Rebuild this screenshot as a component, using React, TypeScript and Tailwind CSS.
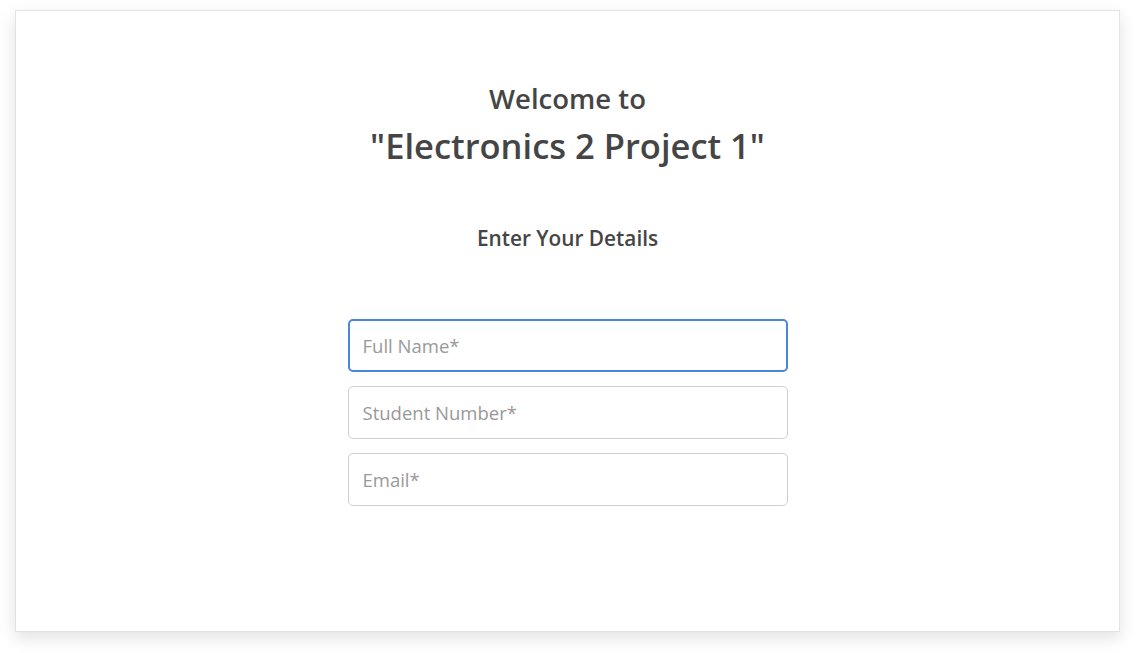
import { useState } from "react";

const FIELDS = [
  { name: "fullName", placeholder: "Full Name*" },
  { name: "studentNumber", placeholder: "Student Number*" },
  { name: "email", placeholder: "Email*" },
];

export default function App() {
  const [values, setValues] = useState<Record<string, string>>({});

  return (
    <div className="min-h-[653px] bg-white pt-[10px] pl-[15px] pr-[16px] font-['Open_Sans',sans-serif]">
      <div className="h-[622px] border border-[#e3e3e3] bg-white shadow-[0_6px_16px_rgba(0,0,0,0.12)]">
        <div className="flex flex-col items-center pt-[69px] text-[#454545]">
          <h2 className="text-[27.5px] leading-[37px] font-semibold">Welcome to</h2>
          <h1 className="mt-[5px] text-[34.5px] leading-[47px] font-semibold">"Electronics 2 Project 1"</h1>
          <p className="mt-[55px] text-[20.8px] leading-[29px] font-semibold">Enter Your Details</p>

          <form className="mt-[66px] flex w-[440px] flex-col gap-[14px]" onSubmit={(e) => e.preventDefault()}>
            {FIELDS.map((f, i) => (
              <input
                key={f.name}
                autoFocus={i === 0}
                value={values[f.name] ?? ""}
                onChange={(e) => setValues({ ...values, [f.name]: e.target.value })}
                placeholder={f.placeholder}
                className={`h-[53px] w-full rounded-[5px] bg-white pb-[1px] text-[18.5px] text-[#444] outline-none placeholder:text-[#999] ${
                  i === 0 ? "border-2 border-[#4a86dd] px-[13px]" : "border border-[#cfcfcf] px-[14px]"
                }`}
              />
            ))}
          </form>
        </div>
      </div>
    </div>
  );
}
